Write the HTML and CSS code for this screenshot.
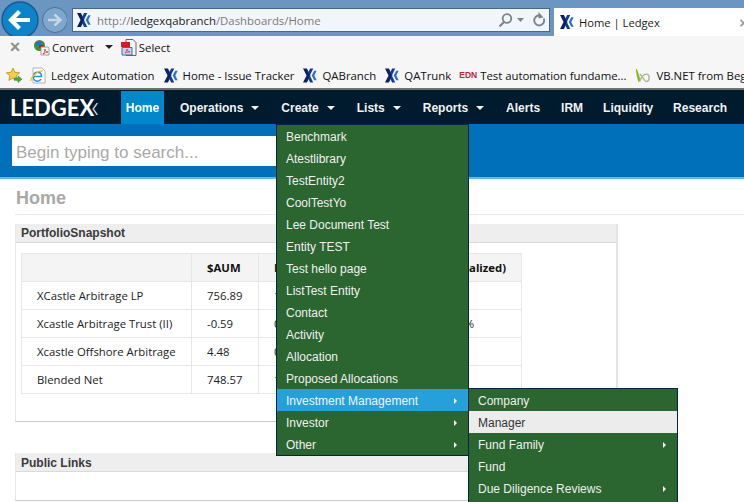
FILE: index.html
```html
<!DOCTYPE html>
<html lang="en">
<head>
<meta charset="utf-8">
<title>Home | Ledgex</title>
<link rel="stylesheet" href="styles.css">
</head>
<body>
<svg class="defs" width="0" height="0">
  <defs>
    <symbol id="xlogo" viewBox="0 0 15 15">
      <path d="M0 0h4.200L8 7.500 4.200 15H0l3.800-7.500z" fill="#0a2360"/>
      <path d="M7.600 0h3.400L7.300 7.500 11 15H7.600L5.700 11l1.900-3.500L5.700 4z" fill="#0f3c9c"/>
      <path d="M12 2.500h2.600l-2.500 5 2.500 5H12L9.400 7.500z" fill="#2c6cd2"/>
    </symbol>
  </defs>
</svg>

<header class="titlebar">
  <svg class="back" width="66" height="36" viewBox="0 0 66 36">
    <circle cx="19" cy="20" r="18" fill="#0a85c9" stroke="#1d5a8c" stroke-width="1.500"/>
    <path d="M9.500 20H29M18.500 11.500 10 20l8.500 8.500" fill="none" stroke="#fff" stroke-width="4.200"/>
    <circle cx="54" cy="20" r="12.500" fill="#7fa7cd" stroke="#4a7196" stroke-width="1"/>
    <path d="M47 20h12.500M53.500 14.500 59.500 20l-6 5.500" fill="none" stroke="#c6d6e6" stroke-width="2.400"/>
  </svg>
  <div class="address">
    <svg class="fav16" width="14" height="14"><use href="#xlogo"/></svg>
    <span class="url">http://<b>ledgexqabranch</b>/Dashboards/Home</span>
    <svg class="addr-tools" width="50" height="16" viewBox="0 0 50 16">
      <circle cx="10" cy="6.500" r="4.300" fill="none" stroke="#7b858f" stroke-width="1.800"/>
      <path d="M7 10 2.500 14.500" stroke="#7b858f" stroke-width="2.200"/>
      <path d="M20 6h7l-3.500 4z" fill="#7b858f"/>
      <path d="M43 3.500a5 5 0 1 0 3.800 3" fill="none" stroke="#7b858f" stroke-width="1.900"/>
      <path d="M41.500 0v6.500l5-1z" fill="#7b858f"/>
    </svg>
  </div>
  <div class="tab">
    <svg class="fav16" width="14" height="14"><use href="#xlogo"/></svg>
    <span class="tab-title">Home | Ledgex</span>
    <span class="tab-close">×</span>
  </div>
</header>

<section class="toolbar">
  <div class="cmdrow">
    <span class="cmd-x">×</span>
    <svg class="cmd-icon" width="17" height="17" viewBox="0 0 17 17">
      <circle cx="6.500" cy="6.500" r="5.500" fill="#3f8f3f"/>
      <path d="M3 3h5v3H3z" fill="#2f6cc0"/>
      <path d="M6 6h5v3H6z" fill="#d81818"/>
      <path d="M8 8h7l1 1v7H8z" fill="#f4f4f4" stroke="#8d8d8d" stroke-width=".8"/>
      <path d="M10 15c2-2 2-4 2-5 0 2 1 3 3 3-2 0-3 1-5 2z" fill="none" stroke="#d43030" stroke-width=".8"/>
    </svg>
    <span class="cmd-label">Convert</span>
    <span class="cmd-caret"></span>
    <svg class="cmd-icon" width="16" height="17" viewBox="0 0 16 17">
      <path d="M5 .5h7l3 3v13H5z" fill="#f5f5f5" stroke="#555" stroke-width=".9"/>
      <path d="M0 3h9v5H0z" fill="#d91a1a"/>
      <path d="M1 8.500h10v7.500H1z" fill="#c5d6f2" stroke="#3e66c4" stroke-width="1"/>
      <path d="M4 14c2-2 2-3 2-4 0 2 1 2 3 3-2 0-3 0-5 1z" fill="none" stroke="#d43030" stroke-width=".8"/>
    </svg>
    <span class="cmd-label">Select</span>
  </div>
  <nav class="favbar">
    <svg class="star" width="17" height="17" viewBox="0 0 17 17">
      <path d="M7 1l2 4.300 4.600.5-3.400 3 .9 4.600L7 11l-4.100 2.400.9-4.600-3.400-3 4.600-.5z" fill="#f4cf45" stroke="#b98d1c" stroke-width=".8"/>
      <path d="M8 11h4V8.800l4 3.400-4 3.300V13.300H8z" fill="#4caf3a" stroke="#2d7d26" stroke-width=".5"/>
    </svg>
    <a class="fav">
      <svg class="ie" width="16" height="17" viewBox="0 0 16 17">
        <path d="M3 1h9l3 3v12H3z" fill="#fff" stroke="#9aa5b1" stroke-width=".8"/>
        <path d="M3.500 9.500h8a4 4 0 0 0-7.800-1.500M11 12a4 4 0 0 1-7.500-2.500" fill="none" stroke="#2b8fe0" stroke-width="1.500"/>
        <path d="M1 14C0 11 8 3 13 4" fill="none" stroke="#f0b429" stroke-width="1.200"/>
      </svg>Ledgex Automation</a>
    <a class="fav"><svg width="14" height="15"><use href="#xlogo"/></svg>Home - Issue Tracker</a>
    <a class="fav"><svg width="14" height="15"><use href="#xlogo"/></svg>QABranch</a>
    <a class="fav"><svg width="14" height="15"><use href="#xlogo"/></svg>QATrunk</a>
    <a class="fav"><span class="edn">EDN</span><span class="edn-title">Test automation fundame...</span></a>
    <a class="fav"><svg width="16" height="17" viewBox="0 0 17 17">
      <path d="M1 1c2 1 3 7 5 12l-2 3C2 11 1 5 1 1z" fill="#8cb61c"/>
      <path d="M5 15c2-6 4-8 7-8 4 0 4 8 0 8-3 0-3-6-7-8" fill="none" stroke="#a9b596" stroke-width="1.500"/>
    </svg>VB.NET from Beginner</a>
  </nav>
</section>

<nav class="mainnav">
  <div class="logo">LEDGEX<svg class="logo-c" width="6" height="12" viewBox="0 0 6 13"><path d="M5.500 0 1 6.500 5.500 13" fill="none" stroke="#c9d2d9" stroke-width="1.500"/></svg></div>
  <a class="navitem active">Home</a>
  <a class="navitem">Operations<i class="caret"></i></a>
  <a class="navitem">Create<i class="caret"></i></a>
  <a class="navitem">Lists<i class="caret"></i></a>
  <a class="navitem">Reports<i class="caret"></i></a>
  <a class="navitem alerts">Alerts</a>
  <a class="navitem">IRM</a>
  <a class="navitem">Liquidity</a>
  <a class="navitem">Research</a>
</nav>

<div class="searchband">
  <div class="searchbox">Begin typing to search...</div>
</div>

<main class="content">
  <h1 class="pagetitle">Home</h1>
  <section class="panel snapshot">
    <h2 class="panelhead">PortfolioSnapshot</h2>
    <div class="panelbody">
      <table class="grid">
        <colgroup><col class="c1"><col class="c2"><col class="c3"><col class="c4"></colgroup>
        <tr><th></th><th>$AUM</th><th>MTD</th><th>YTD (Annualized)</th></tr>
        <tr><td>XCastle Arbitrage LP</td><td>756.89</td><td>1.02%</td><td>8.14%</td></tr>
        <tr><td>Xcastle Arbitrage Trust (II)</td><td>-0.59</td><td>0.00%</td><td>0.0000000%</td></tr>
        <tr><td>Xcastle Offshore Arbitrage</td><td>4.48</td><td>0.00%</td><td>0.00%</td></tr>
        <tr><td>Blended Net</td><td>748.57</td><td>1.02%</td><td>8.14%</td></tr>
      </table>
    </div>
  </section>
  <section class="panel links">
    <h2 class="panelhead">Public Links</h2>
    <div class="panelbody"></div>
  </section>
</main>

<ul class="menu createmenu">
  <li>Benchmark</li>
  <li>Atestlibrary</li>
  <li>TestEntity2</li>
  <li>CoolTestYo</li>
  <li>Lee Document Test</li>
  <li>Entity TEST</li>
  <li>Test hello page</li>
  <li>ListTest Entity</li>
  <li>Contact</li>
  <li>Activity</li>
  <li>Allocation</li>
  <li>Proposed Allocations</li>
  <li class="open sub">Investment Management</li>
  <li class="sub">Investor</li>
  <li class="sub">Other</li>
</ul>
<ul class="menu invmenu">
  <li>Company</li>
  <li class="hover">Manager</li>
  <li class="sub">Fund Family</li>
  <li>Fund</li>
  <li class="sub">Due Diligence Reviews</li>
  <li>Reports</li>
</ul>
</body>
</html>
```

FILE: styles.css
```css
* { box-sizing: border-box; }
html, body { margin: 0; padding: 0; width: 744px; height: 502px; overflow: hidden; background: #fff; }
body { position: relative; font-family: "Liberation Sans", Arial, sans-serif; }
.defs { position: absolute; }

/* browser chrome */
.titlebar { height: 36px; background: #6a96c1; display: flex; align-items: flex-start; overflow: hidden; }
.back { flex: none; margin-left: 1px; margin-right: 5px; }
.address { margin-top: 8px; width: 478px; height: 24px; background: #f2f6fa; border: 1px solid #44688e; display: flex; align-items: center; padding: 0 2px 0 4px; flex: none; }
.address .fav16 { margin-right: 6px; flex: none; }
.url { font: 11.400px "Open Sans", sans-serif; color: #7a7a7a; flex: 1; white-space: nowrap; }
.url b { font-weight: 400; color: #1c1c1c; }
.addr-tools { flex: none; }
.tab { margin-left: 4px; margin-top: 8px; width: 190px; height: 28px; background: #fff; display: flex; align-items: center; padding: 0 0 0 6px; flex: none; overflow: hidden; }
.tab-title { font: 11.200px "Open Sans", sans-serif; color: #1a1a1a; margin-left: 5px; flex: 1; white-space: nowrap; }
.tab-close { color: #999; font: bold 15px "Liberation Sans", sans-serif; margin-right: -4px; flex: none; }

.toolbar { height: 54px; background: #f6f6f7; border-bottom: 2px solid #6f7173; }
.cmdrow { height: 22px; display: flex; align-items: center; padding-left: 9px; }
.cmd-x { width: 12px; font: bold 18px/18px "Liberation Sans", sans-serif; color: #8f8f8f; margin-right: 12px; text-align: center; }
.cmd-icon { flex: none; margin-right: 2px; }
.cmd-label { font: 11.400px "Open Sans", sans-serif; color: #111; }
.cmd-caret { width: 0; height: 0; border: 4px solid transparent; border-top: 4px solid #222; border-bottom: 0; margin-left: 11px; margin-right: 8px; }
.favbar { margin-top: 3px; height: 28px; display: flex; align-items: center; padding-left: 6px; white-space: nowrap; overflow: hidden; }
.star { flex: none; margin-right: 7px; }
.fav { font: 11.400px "Open Sans", sans-serif; color: #111; display: flex; align-items: center; margin-right: 9px; flex: none; }
.fav svg { margin-right: 5px; flex: none; }
.edn { font: bold 8.500px "Liberation Sans", sans-serif; color: #c8203c; margin-left: -1px; margin-right: 3px; }
.edn-title { letter-spacing: -.03px; }

/* site nav */
.mainnav { height: 34px; background: #001a2e; display: flex; align-items: flex-start; white-space: nowrap; overflow: hidden; }
.logo { width: 121px; flex: none; padding: 5px 0 0 10px; font: 700 22px/26px Lato, sans-serif; color: #fff; display: flex; align-items: center; }
.logo-c { margin-left: -2px; margin-top: 1px; flex: none; }
.navitem { margin-top: 1px; height: 33px; font: bold 12px/34px "Liberation Sans", Arial, sans-serif; color: #f2f2f2; padding: 0 6px 0 5px; margin-right: 9px; }
.navitem.alerts { margin-right: 10px; }
.navitem.active { background: #0088cc; color: #fff; padding: 0; margin-right: 11px; width: 43px; text-align: center; }
.caret { display: inline-block; width: 0; height: 0; border: 4px solid transparent; border-top-color: #f2f2f2; border-bottom: 0; margin-left: 8px; margin-right: 2px; vertical-align: 2px; }

.searchband { height: 55px; background: #0070ba; border-bottom: 2px solid #5cb8fa; padding: 12px 0 0 12px; }
.searchbox { width: 270px; height: 30px; background: #fff; font: 17px/33px "Liberation Sans", Arial, sans-serif; color: #a9a9a9; padding-left: 4px; }

/* page */
.content { padding: 0 0 0 15px; }
.pagetitle { margin: 0; height: 36px; border-bottom: 1px solid #e8e8e8; font: bold 18px/38px "Liberation Sans", Arial, sans-serif; color: #a8a8a8; width: 729px; padding-left: 1px; }
.panel { width: 603px; background: #fff; border: 1px solid #e6e6e6; border-top: 0; border-right: 2px solid #e4e4e4; border-bottom: 1px solid #c9c9c9; }
.panelhead { margin: 0; height: 19px; background: #eeeeee; border-bottom: 1px solid #dadada; font: bold 12px/19px "Liberation Sans", Arial, sans-serif; color: #3a3a3a; padding-left: 5px; }
.links .panelhead { line-height: 20px; }
.snapshot { margin-top: 9px; height: 198px; }
.snapshot .panelbody { padding: 10px 5px; }
.links { margin-top: 31px; height: 48px; }
.grid { border-collapse: collapse; table-layout: fixed; width: 500px; }
.c1 { width: 170px; }
.c2 { width: 67px; }
.c3 { width: 136px; }
.c4 { width: 127px; }
.grid th, .grid td { height: 28px; border: 1px solid #e6e6e6; padding: 0 0 0 15px; font: 11.350px "Open Sans", sans-serif; color: #222; text-align: left; white-space: nowrap; }
.grid th { background: #f4f4f4; font-weight: 700; color: #111; }

/* dropdowns */
.menu { position: absolute; margin: 0; padding: 0; list-style: none; background: #2b6530; border: 1px solid #062543; }
.menu li { height: 22px; font: 12px/24px "Liberation Sans", Arial, sans-serif; color: #f0f0f0; padding-left: 9px; position: relative; }
.createmenu { left: 276px; top: 124px; width: 193px; }
.invmenu { left: 468px; top: 388px; width: 210px; }
.menu li.open { background: #25a0da; color: #f4f4f4; }
.menu li.hover { background: #ececec; color: #333; }
.menu li.sub::after { content: ""; position: absolute; right: 11px; top: 9px; width: 0; height: 0; border: 3px solid transparent; border-left: 3px solid #f4f4f4; border-right: 0; }
```
